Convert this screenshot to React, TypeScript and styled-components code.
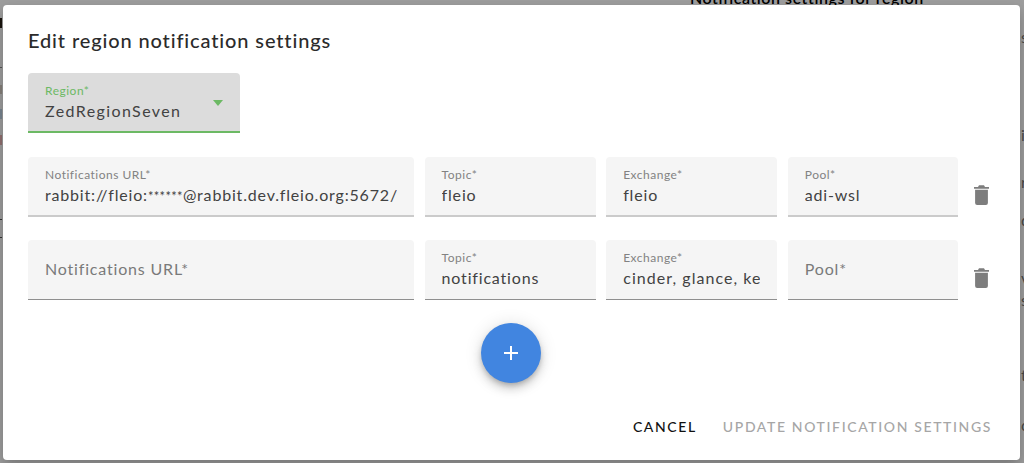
import React from "react";
import styled, { createGlobalStyle } from "styled-components";

const Global = createGlobalStyle`
  html, body { margin: 0; padding: 0; height: 100%; overflow: hidden; background: #fff; }
  body { font-family: "Lato", "Liberation Sans", sans-serif; }
`;

const Page = styled.div`
  position: relative;
  width: 1024px;
  height: 463px;
  overflow: hidden;
  background: #fff;
`;

const PageHeading = styled.h2`
  margin: -12px 0 0 690px;
  font: 600 16px/20px "Lato", sans-serif;
  letter-spacing: 0.55px;
  color: #000;
`;

const PageBody = styled.div`
  margin-top: -1px;
  display: flex;
  justify-content: space-between;
`;

const EdgeColumn = styled.div`
  display: flex;
  flex-direction: column;
  align-items: flex-start;
`;

const RightEdge = styled(EdgeColumn)`
  width: 3px;
`;

const Mark = styled.span<{ $top: number; $h: number; $color: string }>`
  display: block;
  width: 2px;
  margin-top: ${(p) => p.$top}px;
  height: ${(p) => p.$h}px;
  background: ${(p) => p.$color};
`;

const EdgeText = styled.span<{ $top: number }>`
  margin-top: ${(p) => p.$top}px;
  font: 400 16px/16px "Lato", sans-serif;
  color: #777;
`;

const Backdrop = styled.div`
  position: absolute;
  inset: 0;
  background: rgba(0, 0, 0, 0.38);
`;

const Dialog = styled.section`
  position: absolute;
  left: 3px;
  top: 5px;
  width: 1017px;
  height: 455px;
  box-sizing: border-box;
  padding: 23px 25px 0;
  background: #fff;
  border-radius: 4px;
  box-shadow: 0 6px 14px rgba(0, 0, 0, 0.25);
  display: flex;
  flex-direction: column;
`;

const Title = styled.h1`
  margin: 0;
  font: 500 20px/24px "Lato", sans-serif;
  letter-spacing: 0.87px;
  color: #2b2b2b;
`;

const SelectBox = styled.div`
  position: relative;
  margin-top: 21px;
  width: 212px;
  height: 60px;
  box-sizing: border-box;
  padding: 11px 17px 0;
  background: #dcdcdc;
  border-radius: 4px 4px 0 0;
  border-bottom: 2px solid #6cb964;
`;

const Arrow = styled.span`
  position: absolute;
  right: 17px;
  top: 27px;
  width: 0;
  height: 0;
  border-left: 5.5px solid transparent;
  border-right: 5.5px solid transparent;
  border-top: 6px solid #6cb964;
`;

const Label = styled.div<{ $green?: boolean }>`
  font: 400 12px/14px "Lato", sans-serif;
  letter-spacing: 0.5px;
  color: ${(p) => (p.$green ? "#6cb964" : "#828282")};
`;

const Value = styled.div<{ $tracking?: number }>`
  margin-top: 3px;
  font: 400 16px/20px "Lato", sans-serif;
  letter-spacing: ${(p) => p.$tracking ?? 0.82}px;
  color: #424242;
  white-space: nowrap;
  overflow: hidden;
`;

const Stars = styled.span`
  font-size: 13px;
  letter-spacing: 0.3px;
`;

const Rows = styled.div`
  margin-top: 24px;
  display: flex;
  flex-direction: column;
  gap: 23px;
`;

const Row = styled.div`
  display: grid;
  grid-template-columns: 386px 171px 171px 170px 27px;
  column-gap: 10.6px;
  align-items: stretch;
`;

const Field = styled.div`
  height: 60px;
  box-sizing: border-box;
  padding: 11px 17px 0;
  background: #f5f5f5;
  border-radius: 4px 4px 0 0;
  border-bottom: 1px solid #8f8f8f;
  min-width: 0;
`;

const FilledField = styled(Field)`
  border-bottom: 2px solid #cbcbcb;
`;

const Placeholder = styled.div`
  margin-top: 8px;
  font: 400 16px/20px "Lato", sans-serif;
  letter-spacing: 0.82px;
  color: #7a7a7a;
`;

const TrashButton = styled.button`
  border: 0;
  padding: 28px 0 0;
  background: none;
  display: flex;
  align-items: flex-start;
  justify-content: center;
`;

const Fab = styled.button`
  align-self: center;
  margin: 23px 0 0 -1px;
  width: 60px;
  height: 60px;
  border: 0;
  padding: 0;
  border-radius: 50%;
  background: #4185e0;
  box-shadow: 0 3px 5px -1px rgba(0,0,0,.2), 0 6px 10px 0 rgba(0,0,0,.14), 0 1px 18px 0 rgba(0,0,0,.12);
  display: flex;
  align-items: center;
  justify-content: center;
`;

const Actions = styled.div`
  margin-top: 34px;
  padding-right: 3px;
  display: flex;
  justify-content: flex-end;
  gap: 26px;
`;

const ActionButton = styled.button<{ $disabled?: boolean }>`
  border: 0;
  padding: 0;
  background: none;
  font: 500 14px/20px "Lato", sans-serif;
  letter-spacing: 1.62px;
  color: ${(p) => (p.$disabled ? "#a6a6a6" : "#111")};
`;

const Trash = () => (
  <svg width="15" height="20" viewBox="0 0 15 20" aria-hidden="true">
    <path fill="#7d7d7d" d="M5 0.3h5L11 2h4v1.7H0V2h4z" />
    <path fill="#7d7d7d" d="M1.1 4.8h12.8v13.2a2 2 0 0 1-2 2H3.1a2 2 0 0 1-2-2z" />
  </svg>
);

const Plus = () => (
  <svg width="16" height="16" viewBox="0 0 16 16" aria-hidden="true">
    <path fill="none" stroke="#fff" strokeWidth="2" d="M8 1v14M1 8h14" />
  </svg>
);

const leftMarks = [
  { top: 11, h: 10, color: "#2a2118" },
  { top: 39, h: 1, color: "#888" },
  { top: 17, h: 9, color: "#d8cfc6" },
  { top: 15, h: 10, color: "#c4d8ea" },
  { top: 16, h: 10, color: "#e8b4b4" },
  { top: 74, h: 1, color: "#555" },
  { top: 17, h: 1, color: "#555" },
];

const rightLetters = [
  { top: 22, ch: "s" },
  { top: 82, ch: "i" },
  { top: 31, ch: "r" },
  { top: 22, ch: "d" },
  { top: 42, ch: "v" },
  { top: 6, ch: "s" },
  { top: 59, ch: "t" },
  { top: 34, ch: "c" },
];

export default function App() {
  return (
    <Page>
      <Global />
      <PageHeading>Notification settings for region</PageHeading>
      <PageBody>
        <EdgeColumn>
          {leftMarks.map((m, i) => (
            <Mark key={i} $top={m.top} $h={m.h} $color={m.color} />
          ))}
        </EdgeColumn>
        <RightEdge>
          {rightLetters.map((l, i) => (
            <EdgeText key={i} $top={l.top}>{l.ch}</EdgeText>
          ))}
        </RightEdge>
      </PageBody>
      <Backdrop />
      <Dialog>
        <Title>Edit region notification settings</Title>
        <SelectBox>
          <Label $green>Region*</Label>
          <Value $tracking={1.4}>ZedRegionSeven</Value>
          <Arrow />
        </SelectBox>
        <Rows>
          <Row>
            <FilledField>
              <Label>Notifications URL*</Label>
              <Value>rabbit://fleio:<Stars>******</Stars>@rabbit.dev.fleio.org:5672/</Value>
            </FilledField>
            <FilledField>
              <Label>Topic*</Label>
              <Value>fleio</Value>
            </FilledField>
            <FilledField>
              <Label>Exchange*</Label>
              <Value>fleio</Value>
            </FilledField>
            <FilledField>
              <Label>Pool*</Label>
              <Value>adi-wsl</Value>
            </FilledField>
            <TrashButton aria-label="Delete">
              <Trash />
            </TrashButton>
          </Row>
          <Row>
            <Field>
              <Placeholder>Notifications URL*</Placeholder>
            </Field>
            <Field>
              <Label>Topic*</Label>
              <Value>notifications</Value>
            </Field>
            <Field>
              <Label>Exchange*</Label>
              <Value $tracking={1.05}>cinder, glance, keystone</Value>
            </Field>
            <Field>
              <Placeholder>Pool*</Placeholder>
            </Field>
            <TrashButton aria-label="Delete">
              <Trash />
            </TrashButton>
          </Row>
        </Rows>
        <Fab aria-label="Add">
          <Plus />
        </Fab>
        <Actions>
          <ActionButton>CANCEL</ActionButton>
          <ActionButton $disabled>UPDATE NOTIFICATION SETTINGS</ActionButton>
        </Actions>
      </Dialog>
    </Page>
  );
}
